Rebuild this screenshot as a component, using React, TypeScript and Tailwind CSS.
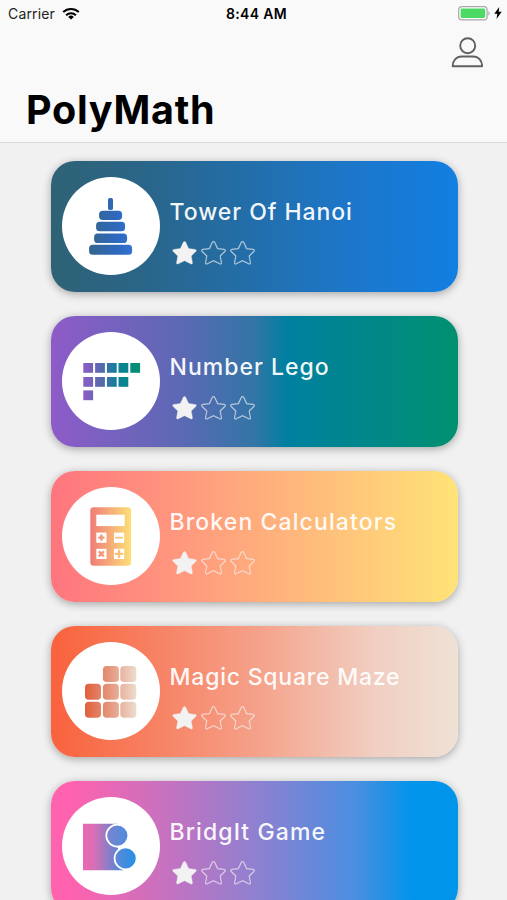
import type { ReactNode } from 'react';

interface Game {
  title: string;
  card: string;
  tracking: string;
  icon: ReactNode;
}

// Horizontal gradient shared by all the shapes of an icon
function IconGradient({ id, stops, x1 = 22, x2 = 78 }: { id: string; stops: [number, string][]; x1?: number; x2?: number }) {
  return (
    <defs>
      <linearGradient id={id} gradientUnits="userSpaceOnUse" x1={x1} y1="0" x2={x2} y2="0">
        {stops.map(([offset, color]) => (
          <stop key={offset} offset={offset} stopColor={color} />
        ))}
      </linearGradient>
    </defs>
  );
}

function TowerIcon() {
  return (
    <svg viewBox="0 0 98 98" className="size-full">
      <IconGradient id="tower" x1={28} x2={71} stops={[[0, '#33668f'], [0.6, '#2f68bc'], [1, '#3273d2']]} />
      <g fill="url(#tower)">
        <rect x="46" y="21" width="5" height="12" rx="1.8" />
        <rect x="37.1" y="33.7" width="23" height="9.2" rx="3.6" />
        <rect x="34.1" y="44.8" width="29" height="9.5" rx="3.6" />
        <rect x="32.1" y="56.6" width="33" height="9.4" rx="3.6" />
        <rect x="27.1" y="67.8" width="43" height="10" rx="3.6" />
      </g>
    </svg>
  );
}

function LegoIcon() {
  const blocks = [
    [22, 31], [33.8, 31], [45.6, 31], [57.2, 31], [69, 31],
    [22, 45], [33.8, 45], [45.6, 45], [57.2, 45],
    [22, 58.4],
  ];
  return (
    <svg viewBox="0.7 0 98 98" className="size-full">
      <IconGradient id="lego" stops={[[0, '#8e5bc8'], [0.3, '#5c69ae'], [0.6, '#0d7f9b'], [1, '#019070']]} />
      <g fill="url(#lego)">
        {blocks.map(([x, y]) => (
          <rect key={`${x}-${y}`} x={x} y={y} width="9.8" height="9.8" />
        ))}
      </g>
    </svg>
  );
}

function CalculatorIcon() {
  return (
    <svg viewBox="0.7 0 98 98" className="size-full">
      <IconGradient id="calc" x1={29} x2={70} stops={[[0, '#ee7d76'], [0.45, '#f5a878'], [1, '#fbe176']]} />
      <rect x="29" y="20.3" width="40.8" height="58.5" rx="3.2" fill="url(#calc)" />
      <g fill="#fff">
        <rect x="35" y="27.7" width="28.4" height="11.4" />
        <rect x="35" y="45.6" width="10.2" height="10.2" />
        <rect x="52.7" y="45.6" width="10.2" height="10.2" />
        <rect x="35" y="61.8" width="10.2" height="10.2" />
        <rect x="52.7" y="61.8" width="10.2" height="10.2" />
      </g>
      <g stroke="url(#calc)" strokeWidth="2.3" fill="none">
        <path d="M37 50.7h6.2M40.1 47.6v6.2" />
        <path d="M54.7 50.6h6.2v.2h-6.2z" strokeWidth="1.6" />
        <path d="M37.6 64.4l5 5M42.6 64.4l-5 5" />
        <path d="M53.6 66.9h8.4M57.8 62.8v8.2" />
      </g>
    </svg>
  );
}

function MazeIcon() {
  const tiles = [
    [41.6, 24], [59, 24],
    [23.7, 41.8], [41.6, 41.8], [59, 41.8],
    [23.7, 59.7], [41.6, 59.7], [59, 59.7],
  ];
  return (
    <svg viewBox="0.7 0 98 98" className="size-full">
      <IconGradient id="maze" x1={24} x2={75} stops={[[0, '#e0603f'], [0.5, '#e59a80'], [1, '#eddccf']]} />
      <g fill="url(#maze)">
        {tiles.map(([x, y]) => (
          <rect key={`${x}-${y}`} x={x} y={y} width="16" height="16" rx="3.8" />
        ))}
      </g>
    </svg>
  );
}

function BridgeIcon() {
  return (
    <svg viewBox="0.7 0 98 98" className="size-full">
      <IconGradient id="bridge" x1={22} x2={75} stops={[[0, '#ea68b1'], [0.2, '#d96fb5'], [0.6, '#6b82cf'], [1, '#2191e6']]} />
      {/* each disc shades on its own range */}
      <IconGradient id="discTop" x1={45} x2={67} stops={[[0, '#7c84cf'], [1, '#4c8cdd']]} />
      <IconGradient id="discBottom" x1={53} x2={75} stops={[[0, '#6488d6'], [1, '#2191e6']]} />
      <path d="M21.7 26.7H56V50l6 11v12.3H21.7z" fill="url(#bridge)" />
      <circle cx="56" cy="38.6" r="11" fill="url(#discTop)" stroke="#fff" strokeWidth="1.7" />
      <circle cx="64.3" cy="61.4" r="11" fill="url(#discBottom)" stroke="#fff" strokeWidth="1.7" />
    </svg>
  );
}

const games: Game[] = [
  {
    title: 'Tower Of Hanoi',
    card: 'bg-[linear-gradient(90deg,#2f6275_0%,#2a6588_22%,#236ea9_48%,#1c77cb_75%,#127fe2_100%)]',
    tracking: 'tracking-[0.93px]',
    icon: <TowerIcon />,
  },
  {
    title: 'Number Lego',
    card: 'bg-[linear-gradient(90deg,#8e5bc8_0%,#5c69b4_32%,#3275a6_50%,#0080a0_58%,#019070_100%)]',
    tracking: 'tracking-[1px]',
    icon: <LegoIcon />,
  },
  {
    title: 'Broken Calculators',
    card: 'bg-[linear-gradient(90deg,#ff757e_0%,#ffae7d_52%,#ffe377_100%)]',
    tracking: 'tracking-[1.1px]',
    icon: <CalculatorIcon />,
  },
  {
    title: 'Magic Square Maze',
    card: 'bg-[linear-gradient(90deg,#f9623c_0%,#f59f87_49%,#f1cfc2_80%,#eee2d5_100%)]',
    tracking: 'tracking-[0.77px]',
    icon: <MazeIcon />,
  },
  {
    title: 'BridgIt Game',
    card: 'bg-[linear-gradient(90deg,#ff62ae_0%,#ff62ae_5%,#9080d0_50%,#4a8ee0_75%,#0094eb_89%,#0094eb_100%)]',
    tracking: 'tracking-[1.1px]',
    icon: <BridgeIcon />,
  },
];

function Star({ filled }: { filled?: boolean }) {
  return (
    <svg viewBox="0 0 29 28" className="h-7 w-[29px]">
      <path
        d="M14.5 2.6c.7 0 1.1.5 1.4 1.1l2.7 5.9 6.5.8c1.3.2 1.6 1.2.7 2.1l-4.6 4.5 1.2 6.5c.2 1.3-.6 1.9-1.7 1.3l-6.2-3.1-6.2 3.1c-1.1.6-1.9 0-1.7-1.3l1.2-6.5-4.6-4.5c-.9-.9-.6-1.9.7-2.1l6.5-.8 2.7-5.9c.3-.6.7-1.1 1.4-1.1z"
        fill={filled ? '#f2f2f2' : 'none'}
        stroke="#f2f2f2"
        strokeOpacity={filled ? 1 : 0.68}
        strokeWidth={filled ? 0.4 : 1.2}
      />
    </svg>
  );
}

function StatusBar() {
  return (
    <div className="grid h-7 grid-cols-3 items-center pl-2 pr-[5px] text-black">
      <div className="flex items-center gap-[7px]">
        <span className="text-[14px] leading-5 tracking-[0.15px] text-[#222]">Carrier</span>
        <svg viewBox="0 0 18 13" className="mb-[2px] h-[13px] w-[18px]">
          <g fill="none" stroke="#000" strokeWidth="2.1">
            <path d="M1.2 5.1a11.3 11.3 0 0 1 15.6 0" />
            <path d="M4.1 8.2a7.1 7.1 0 0 1 9.8 0" />
          </g>
          <path d="M9 12.6 6.2 9.9a4 4 0 0 1 5.6 0z" />
        </svg>
      </div>
      <span className="pl-[3px] text-center text-[14px] leading-none font-semibold tracking-[0.3px]">8:44 AM</span>
      <div className="flex items-center justify-end gap-[3px] pb-[2px]">
        <svg viewBox="0 0 33 15" className="h-[15px] w-[33px]">
          <rect x=".7" y=".7" width="28.4" height="13.2" rx="3.2" fill="#fff" stroke="#a7a7a7" strokeWidth="1.2" />
          <rect x="2.6" y="2.6" width="24.6" height="9.4" rx="1.4" fill="#4cd964" />
          <path d="M30.4 5.2c1.6.5 1.6 3.8 0 4.3z" fill="#a7a7a7" />
        </svg>
        <svg viewBox="0 0 8 12" className="h-3 w-2">
          <path d="M5.2 0 .3 6.8h3L2.5 12l5.2-7.2h-3z" />
        </svg>
      </div>
    </div>
  );
}

function GameCard({ game }: { game: Game }) {
  return (
    <div className={`flex h-[130.5px] shrink-0 rounded-[24px] pl-[11px] pt-[15.5px] shadow-[0_2px_8px_rgba(0,0,0,0.32)] ${game.card}`}>
      <div className="size-[98px] shrink-0 rounded-full bg-white">{game.icon}</div>
      <div className="pl-[10px] pt-[19px]">
        <h2 className={`whitespace-nowrap text-[23px] leading-8 font-medium text-white/95 ${game.tracking}`}>{game.title}</h2>
        <div className="mt-[11px] flex">
          <Star filled />
          <Star />
          <Star />
        </div>
      </div>
    </div>
  );
}

export default function App() {
  return (
    <div className="flex h-[900px] w-[507px] flex-col overflow-hidden bg-[#f1f1f1] font-[Inter,sans-serif]">
      {/* Header */}
      <header className="h-[143px] shrink-0 border-b border-[#dadada] bg-[#f9f9f9]">
        <StatusBar />
        <div className="flex justify-end pr-6 pt-[9px]">
          <svg viewBox="0 0 32 31" className="h-[31px] w-8" fill="none" stroke="#606060" strokeWidth="1.9">
            <circle cx="16.7" cy="8.7" r="7.5" />
            <path d="M1.7 29.2c0-5.8 3.8-9.7 9-9.7h11.4c5.2 0 9 3.9 9 9.7z" strokeLinejoin="round" />
          </svg>
        </div>
        <h1 className="pl-[26px] pt-[17px] text-[39.5px] leading-[50px] font-bold tracking-[0.75px] text-black">PolyMath</h1>
      </header>

      {/* Game list */}
      <main className="flex flex-col gap-[24.6px] pl-[50.6px] pr-[49px] pt-[18px]">
        {games.map((game) => (
          <GameCard key={game.title} game={game} />
        ))}
      </main>
    </div>
  );
}
